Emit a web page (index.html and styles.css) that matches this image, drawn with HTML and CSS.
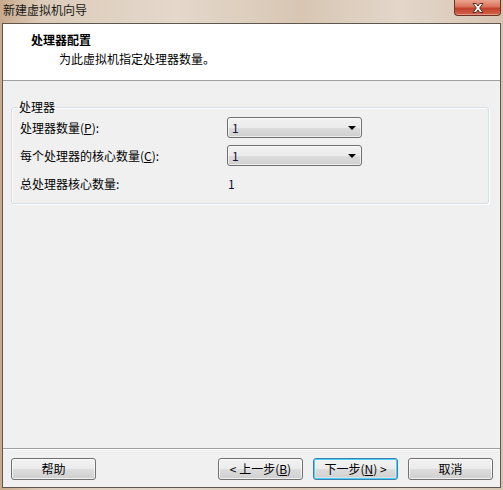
FILE: index.html
```html
<!DOCTYPE html>
<html lang="zh-CN">
<head>
<meta charset="utf-8">
<title>新建虚拟机向导</title>
<link rel="stylesheet" href="styles.css">
</head>
<body>
<div class="window">
  <div class="titlebar">
    <span class="title">新建虚拟机向导</span>
    <div class="close">
      <svg width="20" height="12" viewBox="0 0 20 12">
        <path d="M5 1.5h3.2l1.8 2.6 1.8-2.6h3.2l-3.3 4.5 3.3 4.5h-3.2l-1.8-2.6-1.8 2.6h-3.2l3.3-4.5z" fill="#fff" stroke="#5a2a22" stroke-width="1"/>
      </svg>
    </div>
  </div>
  <div class="client">
    <div class="header">
      <div class="h-title">处理器配置</div>
      <div class="h-sub">为此虚拟机指定处理器数量。</div>
    </div>
    <div class="content">
      <fieldset class="group">
        <legend>处理器</legend>
        <div class="grid">
          <span class="label">处理器数量(<u>P</u>):</span>
          <div class="combo"><span class="val">1</span><span class="arrow"></span></div>
          <span class="label">每个处理器的核心数量(<u>C</u>):</span>
          <div class="combo"><span class="val">1</span><span class="arrow"></span></div>
          <span class="label">总处理器核心数量:</span>
          <span class="total">1</span>
        </div>
      </fieldset>
    </div>
    <div class="footer">
      <button class="btn">帮助</button>
      <div class="spacer"></div>
      <button class="btn">&lt; 上一步(<u>B</u>)</button>
      <button class="btn default">下一步(<u>N</u>) &gt;</button>
      <button class="btn">取消</button>
    </div>
  </div>
</div>
</body>
</html>
```

FILE: styles.css
```css
* { box-sizing: border-box; }
html, body {
  margin: 0;
  padding: 0;
  width: 503px;
  height: 490px;
  overflow: hidden;
  font-family: "Noto Sans CJK SC", sans-serif;
  font-size: 12px;
  color: #000;
}
.window {
  width: 503px;
  height: 490px;
  display: flex;
  flex-direction: column;
  background: linear-gradient(to right, #c9a98c 0%, #dccbb9 8%, #e4d8cb 35%, #d8c6b3 60%, #e3d7ca 80%, #d7c4b1 100%);
}
.titlebar {
  height: 23px;
  display: flex;
  justify-content: space-between;
  align-items: flex-start;
  flex: none;
}
.title {
  padding: 3px 0 0 3px;
  line-height: 14px;
  color: #1a1a1a;
}
.close {
  width: 47px;
  height: 16px;
  margin-right: 2px;
  border: 1px solid #6e3326;
  border-top: none;
  border-radius: 0 0 4px 4px;
  background: linear-gradient(to bottom, #e9a48f 0%, #d9735a 45%, #c2412a 55%, #d2644a 100%);
  display: flex;
  align-items: center;
  justify-content: center;
  box-shadow: inset 0 -1px 0 rgba(255,255,255,0.35);
}
.close svg { display: block; }
.client {
  flex: 1;
  margin: 0 2px 2px 2px;
  border: 1px solid #5e5750;
  background: #f0f0f0;
  display: flex;
  flex-direction: column;
}
.header {
  height: 57px;
  flex: none;
  background: #fff;
  border-bottom: 1px solid #a0a0a0;
  padding: 9px 0 0 28px;
}
.h-title {
  font-weight: bold;
  line-height: 14px;
}
.h-sub {
  margin-top: 5px;
  padding-left: 28px;
  line-height: 14px;
}
.content {
  flex: 1;
  padding: 19px 11px 0 8px;
}
.group {
  margin: 0;
  padding: 3px 6px 9px 6px;
  border: 1px solid #d5dfe5;
  border-radius: 3px;
  box-shadow: inset 1px 1px 0 #fff, 1px 1px 0 #fff;
}
.group legend {
  padding: 0 1px;
  line-height: 14px;
  color: #000;
}
.grid {
  display: grid;
  grid-template-columns: 207px 135px;
  grid-auto-rows: 21px;
  row-gap: 7px;
  align-items: center;
  padding-left: 2px;
}
.label {
  line-height: 14px;
}
.combo {
  height: 21px;
  border: 1px solid #707070;
  border-radius: 3px;
  background: linear-gradient(to bottom, #f2f2f2 0%, #ebebeb 50%, #dddddd 50%, #cfcfcf 100%);
  box-shadow: inset 0 0 0 1px rgba(255,255,255,0.6);
  display: flex;
  align-items: center;
  justify-content: space-between;
  padding: 0 5px 0 4px;
}
.val {
  line-height: 14px;
  color: #1a0f3a;
}
.arrow {
  width: 0;
  height: 0;
  border-left: 4px solid transparent;
  border-right: 4px solid transparent;
  border-top: 4px solid #000;
}
.total {
  line-height: 14px;
  padding-left: 1px;
  color: #1a0f3a;
}
.footer {
  flex: none;
  border-top: 1px solid #a0a0a0;
  box-shadow: inset 0 1px 0 #fff;
  padding: 9px 7px 7px 8px;
  display: flex;
  gap: 10px;
}
.spacer { flex: 1; }
.btn {
  width: 85px;
  height: 22px;
  padding: 0;
  font-family: inherit;
  font-size: 12px;
  line-height: 14px;
  color: #000;
  border: 1px solid #707070;
  border-radius: 3px;
  background: linear-gradient(to bottom, #f2f2f2 0%, #ebebeb 50%, #dddddd 50%, #cfcfcf 100%);
  box-shadow: inset 0 0 0 1px rgba(255,255,255,0.7);
}
.btn.default {
  border-color: #3c7fb1;
  box-shadow: inset 0 0 0 1px #48d2f8, inset 0 0 0 2px rgba(255,255,255,0.3);
}
u { text-decoration: underline; text-underline-offset: 1px; }
```
